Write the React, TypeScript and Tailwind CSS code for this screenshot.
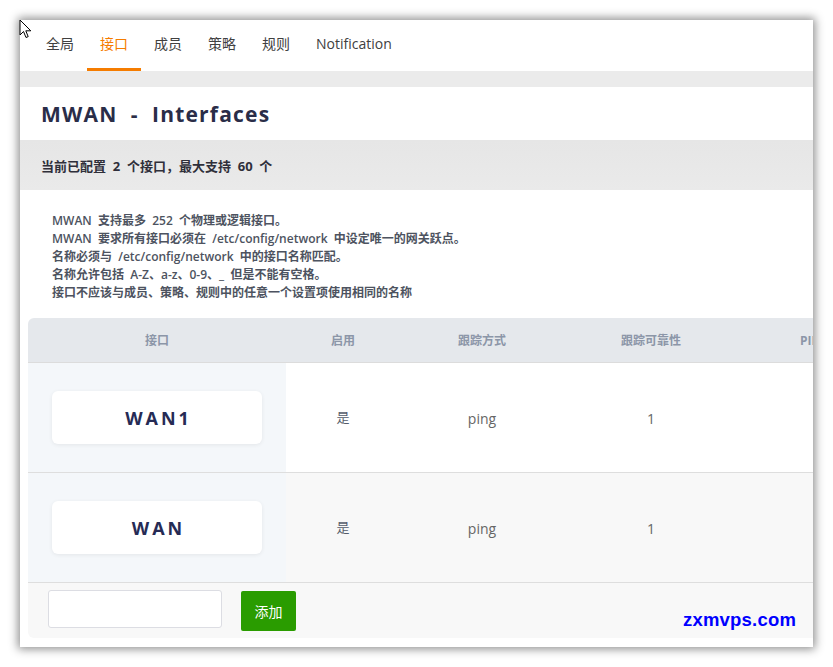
import React from "react";

const cjk = { fontFamily: '"Open Sans", "Noto Sans CJK SC", sans-serif' };

const tabs = ["全局", "接口", "成员", "策略", "规则", "Notification"];

const notes = [
  "MWAN  支持最多  252  个物理或逻辑接口。",
  "MWAN  要求所有接口必须在  /etc/config/network  中设定唯一的网关跃点。",
  "名称必须与  /etc/config/network  中的接口名称匹配。",
  "名称允许包括  A-Z、a-z、0-9、_  但是不能有空格。",
  "接口不应该与成员、策略、规则中的任意一个设置项使用相同的名称",
];

const rows = [
  { name: "WAN1", enabled: "是", track: "ping", rel: "1", alt: false },
  { name: "WAN", enabled: "是", track: "ping", rel: "1", alt: true },
];

const Cursor = () => (
  <svg className="absolute left-[19px] top-[19px]" width="14" height="21" viewBox="0 0 14 21">
    <path d="M1 1 L1 16 L4.5 12.5 L7 18.5 L9.2 17.6 L6.8 11.8 L11.8 11.8 Z" fill="#fff" stroke="#000" strokeWidth="1" strokeLinejoin="round" />
  </svg>
);

const App: React.FC = () => {
  return (
    <div className="relative w-[833px] h-[667px] bg-white pt-[20px] pl-[20px]" style={cjk}>
      <div className="w-[793px] h-[627px] bg-white overflow-hidden shadow-[0_0_9px_2px_rgba(0,0,0,0.45)] flex flex-col relative">
        {/* tabs */}
        <div className="h-[51px] flex pl-[13px] shrink-0">
          {tabs.map((t, i) => (
            <div
              key={t}
              className={
                "px-[13px] h-full flex items-center pb-[1px] text-[14px] border-b-[3px] " +
                (i === 1 ? "text-[#f57c00] border-[#f57c00]" : "text-[#404040] border-transparent")
              }
            >
              {t}
            </div>
          ))}
        </div>
        <div className="h-[16px] bg-[#ebebeb] shrink-0" />
        {/* title */}
        <div className="h-[53px] flex items-center pl-[21px] pt-[3px] shrink-0">
          <h1 className="text-[21px] font-bold tracking-[1.2px] text-[#2a2d48]">MWAN&nbsp; - &nbsp;Interfaces</h1>
        </div>
        <div className="h-[50px] bg-gradient-to-b from-[#e6e6e6] to-[#eaeaea] flex items-center pl-[21px] pt-[3px] shrink-0">
          <span className="text-[13px] font-bold text-[#2f2f3a] whitespace-pre">当前已配置  2  个接口，最大支持  60  个</span>
        </div>
        {/* notes */}
        <div className="pl-[32px] pt-[22px] h-[128px] shrink-0">
          {notes.map((n) => (
            <div key={n} className="text-[12px] leading-[18px] font-semibold text-[#4d5360] whitespace-pre">
              {n}
            </div>
          ))}
        </div>
        {/* table */}
        <div className="ml-[8px] w-[800px] rounded-l-[6px] overflow-hidden">
          <div className="grid grid-cols-[258px_114px_164px_174px_90px] h-[45px] bg-[#e5e8ec] border-b border-[#dcdcdc] text-[12px] font-bold text-[#8c96a8] items-center pt-[1px]">
            <div className="text-center">接口</div>
            <div className="text-center">启用</div>
            <div className="text-center">跟踪方式</div>
            <div className="text-center">跟踪可靠性</div>
            <div className="pl-[62px] whitespace-nowrap">PING 默认间隔</div>
          </div>
          {rows.map((r) => (
            <div
              key={r.name}
              className={
                "grid grid-cols-[258px_114px_164px_174px_90px] h-[110px] border-b border-[#dedede] items-stretch " +
                (r.alt ? "bg-[#f8f8f8]" : "bg-white")
              }
            >
              <div className="bg-[#f4f7fa] flex items-center justify-center">
                <div className="w-[210px] h-[53px] bg-white rounded-[6px] shadow-[0_1px_4px_rgba(0,0,0,0.07)] flex items-center justify-center pt-[1px] pl-[3px] text-[18px] font-bold tracking-[3px] text-[#262b55]">
                  {r.name}
                </div>
              </div>
              <div className="flex items-center justify-center pt-[1px] text-[13px] text-[#555c6b]">{r.enabled}</div>
              <div className="flex items-center justify-center pt-[1px] text-[14px] text-[#666]">{r.track}</div>
              <div className="flex items-center justify-center pt-[1px] text-[14px] text-[#666]">{r.rel}</div>
              <div />
            </div>
          ))}
          <div className="h-[55px] bg-[#f8f8f8] flex items-start pl-[20px] pt-[7px] gap-[19px]">
            <input className="w-[174px] h-[38px] bg-white border border-[#dcdde3] rounded-[3px] outline-none" />
            <button className="w-[55px] h-[40px] bg-[#2a9c00] text-white text-[14px] rounded-[2px] mt-[1px]">添加</button>
          </div>
        </div>
        <div
          className="absolute left-[663px] top-[591px] text-[18.5px] font-bold text-[#0000ff] tracking-[0.2px] leading-none"
          style={{ fontFamily: '"Liberation Sans", Arial, sans-serif' }}
        >
          zxmvps.com
        </div>
      </div>
      <Cursor />
    </div>
  );
};

export default App;
